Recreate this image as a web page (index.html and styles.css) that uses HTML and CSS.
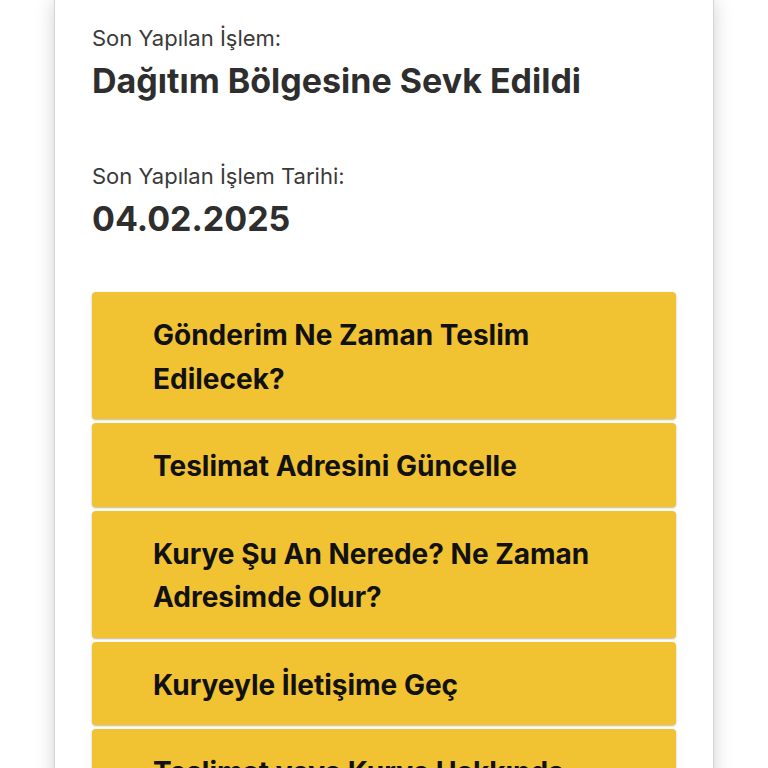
FILE: index.html
```html
<!DOCTYPE html>
<html lang="tr">
<head>
    <meta charset="UTF-8">
    <meta name="viewport" content="width=device-width, initial-scale=1.0">
    <title>Gönderi Takip</title>
    <link rel="stylesheet" href="styles.css">
</head>
<body>

<div class="container">
    <div class="info-group">
        <p class="info-label">Son Yapılan İşlem:</p>
        <p class="info-value">Dağıtım Bölgesine Sevk Edildi</p>
    </div>

    <div class="info-group">
        <p class="info-label">Son Yapılan İşlem Tarihi:</p>
        <p class="info-value">04.02.2025</p>
    </div>

    <div class="actions">
        <button type="button" class="action-button">Gönderim Ne Zaman Teslim Edilecek?</button>
        <button type="button" class="action-button">Teslimat Adresini Güncelle</button>
        <button type="button" class="action-button">Kurye Şu An Nerede? Ne Zaman Adresimde Olur?</button>
        <button type="button" class="action-button">Kuryeyle İletişime Geç</button>
        <button type="button" class="action-button">Teslimat veya Kurye Hakkında Şikayet Oluştur</button>
    </div>
</div>

</body>
</html>
```

FILE: styles.css
```css
body {
    font-family: 'Inter', 'Liberation Sans', Arial, sans-serif;
    background-color: #ffffff;
    color: #333;
    margin: 0;
    padding: 0;
}

.container {
    width: 584px;
    margin: 0 0 0 54px;
    padding: 24px 37px 40px 37px;
    background: #ffffff;
    border-left: 1px solid #d4d4d4;
    border-right: 1px solid #d4d4d4;
    box-shadow: 0 0 18px rgba(0, 0, 0, 0.18);
}

.info-group {
    margin-bottom: 61px;
}

.info-label {
    margin: 0;
    font-size: 22px;
    line-height: 28px;
    color: #3a3a3a;
}

.info-value {
    margin: 9px 0 0 0;
    font-size: 34px;
    line-height: 40px;
    font-weight: bold;
    color: #2e2e2e;
}

.actions {
    display: flex;
    flex-direction: column;
    gap: 4px;
    margin-top: -8px;
}

.action-button {
    display: block;
    width: 100%;
    text-align: left;
    background-color: #f1c232;
    color: #111;
    font-family: inherit;
    font-size: 28px;
    font-weight: bold;
    line-height: 43.5px;
    padding: 22px 80px 18px 61px;
    border: none;
    border-radius: 4px;
    box-shadow: 0 1px 2px rgba(120, 90, 20, 0.45);
    cursor: pointer;
}
```
